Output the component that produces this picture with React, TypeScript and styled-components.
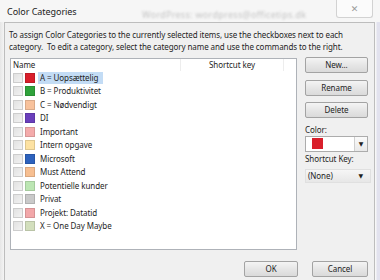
import styled, { createGlobalStyle } from 'styled-components'

interface Category {
  name: string
  color: string
  selected?: boolean
}

const categories: Category[] = [
  { name: 'A = Uopsættelig', color: '#d91f2b', selected: true },
  { name: 'B = Produktivitet', color: '#2fa23b' },
  { name: 'C = Nødvendigt', color: '#f8c29c' },
  { name: 'DI', color: '#6a3fbc' },
  { name: 'Important', color: '#f4abab' },
  { name: 'Intern opgave', color: '#fde2a2' },
  { name: 'Microsoft', color: '#2d62bd' },
  { name: 'Must Attend', color: '#f7bf91' },
  { name: 'Potentielle kunder', color: '#bce6b3' },
  { name: 'Privat', color: '#c9c9c9' },
  { name: 'Projekt: Datatid', color: '#f2a7a9' },
  { name: 'X = One Day Maybe', color: '#d3dfbd' },
]

const text = `
  font-size: 8px;
  letter-spacing: -0.08px;
`

const GlobalStyle = createGlobalStyle`
  html, body {
    margin: 0;
    padding: 0;
    background: #ececec;
  }
  body {
    font-family: "Noto Sans", "DejaVu Sans", sans-serif;
    color: #1e1e1e;
  }
`

const Window = styled.div`
  width: 380px;
  height: 280px;
  overflow: hidden;
  display: flex;
  flex-direction: column;
  background: linear-gradient(90deg, #e6e6e6 0, #f4f4f4 4px, #f7f7f7 376px, #e2e2ee 377px);
`

const TitleBar = styled.div`
  height: 22px;
  flex-shrink: 0;
  display: flex;
  align-items: flex-start;
  position: relative;
  background: #f6f6f6;
`

const Title = styled.span`
  margin: 5px 0 0 7px;
  font-size: 9px;
  letter-spacing: -0.05px;
  line-height: 14px;
  color: #222;
`

const Watermark = styled.span`
  position: absolute;
  left: 142px;
  top: 8px;
  font-size: 9px;
  color: #c4c4c4;
  filter: blur(0.9px);
  letter-spacing: 0.3px;
`

const CloseButton = styled.div`
  position: absolute;
  right: 7px;
  top: 0;
  width: 35px;
  height: 17px;
  border: 1px solid #d2d2d2;
  border-top: none;
  border-radius: 0 0 3px 3px;
  background: #fbfbfb;
  display: flex;
  align-items: center;
  justify-content: center;
  color: #9a9a9a;
  font-size: 9px;
`

const Body = styled.div`
  flex: 1;
  min-width: 0;
  margin: 0 5px 0 4px;
  border: 1px solid #bdbdbd;
  border-bottom: none;
  background: #f0f0f0;
  padding: 6px 5px 0 4px;
  display: flex;
  flex-direction: column;
  overflow: hidden;
`

const Description = styled.p`
  margin: 0;
  ${text}
  line-height: 12px;
  color: #1e1e1e;
  white-space: nowrap;
`

const Main = styled.div`
  display: flex;
  gap: 8px;
  margin-top: 5px;
  margin-left: 1px;
`

const ListBox = styled.div`
  width: 285px;
  height: 190px;
  border: 1px solid #aeb2b8;
  background: #fff;
  display: flex;
  flex-direction: column;
`

const HeaderRow = styled.div`
  display: flex;
  height: 12px;
  ${text}
  line-height: 12px;
`

const HeaderCell = styled.div<{ $width: number; $center?: boolean }>`
  width: ${({ $width }) => $width}px;
  padding-left: ${({ $center }) => ($center ? 0 : 2)}px;
  text-align: ${({ $center }) => ($center ? 'center' : 'left')};
  border-right: 1px solid #ededed;
  box-sizing: border-box;
`

const Row = styled.div`
  display: flex;
  align-items: center;
  height: 13.5px;
  padding-left: 2px;
`

const Checkbox = styled.span`
  width: 10px;
  height: 10px;
  box-sizing: border-box;
  border: 1px solid #cdcdcd;
  background: linear-gradient(135deg, #e2e2e2, #f2f2f2);
`

const Swatch = styled.span<{ $color: string }>`
  width: 10px;
  height: 10px;
  margin-left: 2px;
  box-sizing: border-box;
  background: ${({ $color }) => $color};
  border: 1px solid rgba(0, 0, 0, 0.12);
`

const RowLabel = styled.span<{ $selected?: boolean }>`
  margin-left: 3px;
  padding: 0 2px;
  height: 12px;
  line-height: 12px;
  ${text}
  background: ${({ $selected }) => ($selected ? '#c3dcf5' : 'transparent')};
  padding-right: ${({ $selected }) => ($selected ? 5 : 2)}px;
`

const Side = styled.div`
  width: 64px;
  margin-top: -1px;
  display: flex;
  flex-direction: column;
`

const Button = styled.div<{ $width?: number }>`
  width: ${({ $width }) => $width ?? 63}px;
  height: 16px;
  flex-shrink: 0;
  box-sizing: border-box;
  border: 1px solid #a3a3a3;
  border-radius: 2px;
  background: linear-gradient(#f4f4f4, #e6e6e6 50%, #dadada);
  ${text}
  line-height: 14px;
  text-align: center;
  color: #1e1e1e;
  margin-bottom: 6.5px;
`

const FieldLabel = styled.div`
  ${text}
  line-height: 12px;
  margin-top: -1px;
`

const ColorSelect = styled.div`
  width: 63px;
  height: 16px;
  box-sizing: border-box;
  border: 1px solid #acacac;
  background: #fff;
  display: flex;
  align-items: center;
  padding-left: 6px;
  margin-bottom: 2px;
`

const ColorChip = styled.span`
  width: 11px;
  height: 11px;
  background: #d91f2b;
`

const ArrowBox = styled.span`
  margin-left: auto;
  width: 13px;
  height: 14px;
  box-sizing: border-box;
  border-left: 1px solid #cfcfcf;
  background: linear-gradient(#fafafa, #e9e9e9);
  display: flex;
  align-items: center;
  justify-content: center;
  font-size: 6px;
  color: #222;
`

const KeySelect = styled.div`
  width: 66px;
  height: 14px;
  margin-top: 4px;
  box-sizing: border-box;
  background: linear-gradient(#f6f6f6, #e7e7e7);
  border: 1px solid #e0e0e0;
  display: flex;
  align-items: center;
  padding: 0 7px 0 2px;
  ${text}
`

const KeyArrow = styled.span`
  margin-left: auto;
  font-size: 6px;
`

const Footer = styled.div`
  display: flex;
  justify-content: flex-end;
  gap: 14px;
  margin-top: 11px;
  padding-right: 1px;
`

export default function App() {
  return (
    <>
      <GlobalStyle />
      <Window>
        <TitleBar>
          <Title>Color Categories</Title>
          <Watermark>WordPress: wordpress@officetips.dk</Watermark>
          <CloseButton>✕</CloseButton>
        </TitleBar>
        <Body>
          <Description>
            To assign Color Categories to the currently selected items, use the checkboxes next to each
            <br />
            category.&nbsp; To edit a category, select the category name and use the commands to the right.
          </Description>
          <Main>
            <ListBox>
              <HeaderRow>
                <HeaderCell $width={170}>Name</HeaderCell>
                <HeaderCell $width={103} $center>
                  Shortcut key
                </HeaderCell>
              </HeaderRow>
              {categories.map((c) => (
                <Row key={c.name}>
                  <Checkbox />
                  <Swatch $color={c.color} />
                  <RowLabel $selected={c.selected}>{c.name}</RowLabel>
                </Row>
              ))}
            </ListBox>
            <Side>
              <Button>New...</Button>
              <Button>Rename</Button>
              <Button>Delete</Button>
              <FieldLabel>Color:</FieldLabel>
              <ColorSelect>
                <ColorChip />
                <ArrowBox>▼</ArrowBox>
              </ColorSelect>
              <FieldLabel>Shortcut Key:</FieldLabel>
              <KeySelect>
                (None)
                <KeyArrow>▼</KeyArrow>
              </KeySelect>
            </Side>
          </Main>
          <Footer>
            <Button $width={54}>OK</Button>
            <Button $width={56}>Cancel</Button>
          </Footer>
        </Body>
      </Window>
    </>
  )
}
